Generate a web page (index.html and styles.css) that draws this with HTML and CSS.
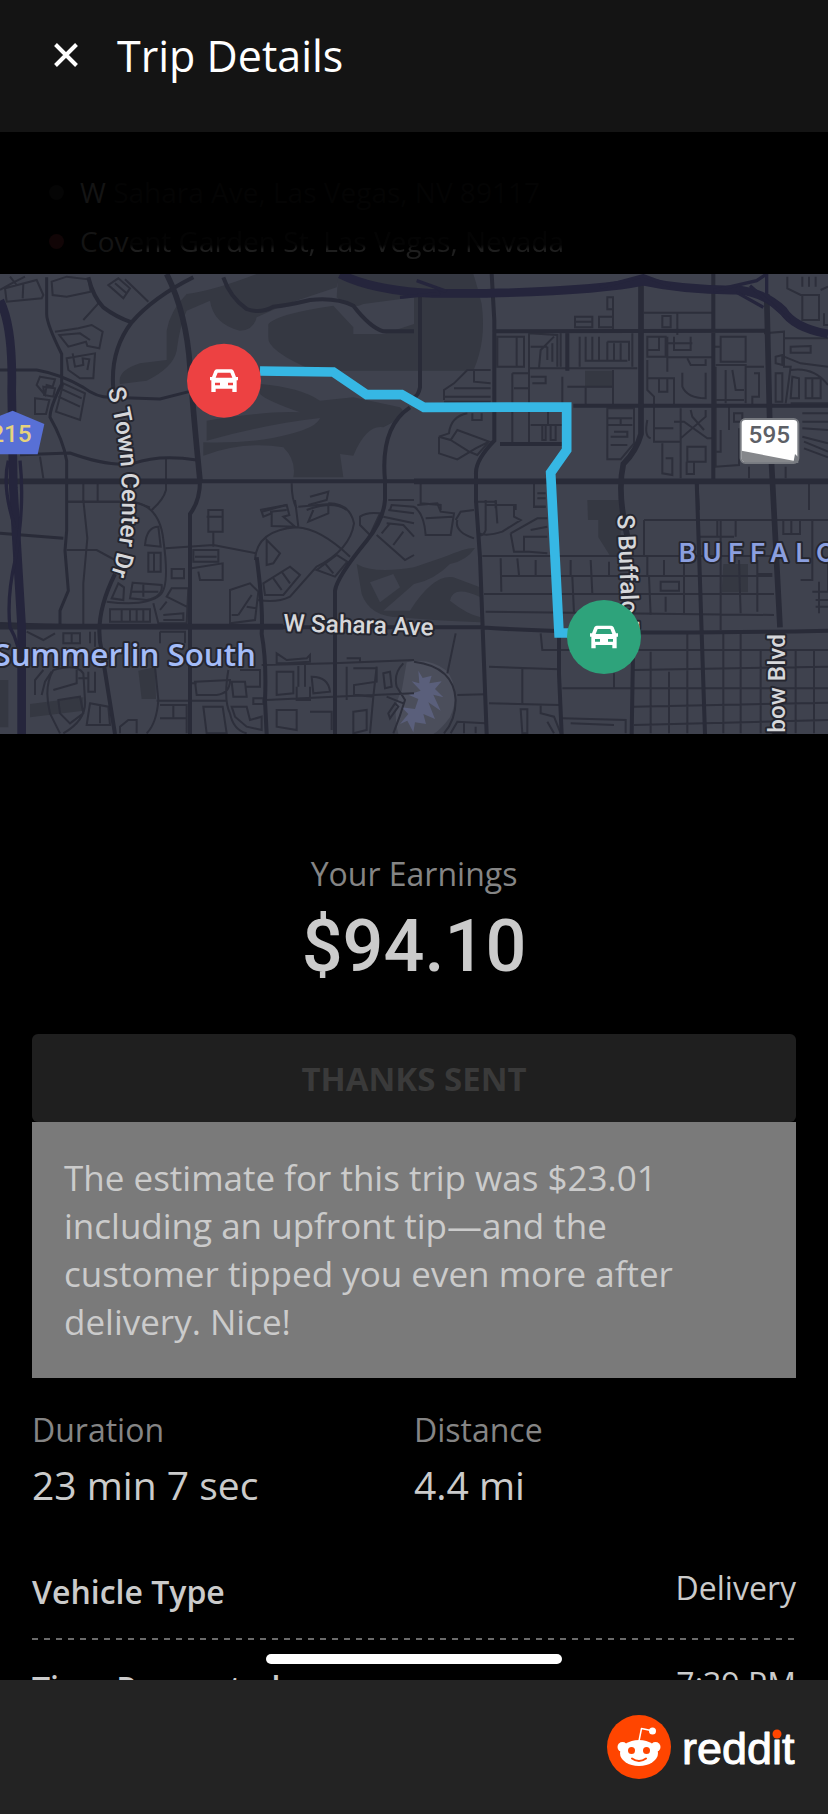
FILE: index.html
```html
<!DOCTYPE html>
<html lang="en">
<head>
  <meta charset="UTF-8" />
  <meta name="viewport" content="width=device-width, initial-scale=1.0" />
  <title>Trip Details</title>
  <link rel="stylesheet" href="styles.css">
</head>
<body>
  <header class="header">
    <button class="close" type="button" aria-label="Close">
      <svg viewBox="0 0 24 24"><path d="M1.500 1.500 22.500 22.500M22.500 1.500 1.500 22.500"/></svg>
    </button>
    <h1>Trip Details</h1>
  </header>

  <main class="trip">
    <ul class="stops">
      <li><i class="dot"></i><span>W<span class="faded"> Sahara Ave, Las Vegas, NV 89117</span></span></li>
      <li><i class="dot dot-end"></i><span>Cov<span class="half">ent Garden St, Las Vegas, Nevada</span></span></li>
    </ul>

    <svg class="map" viewBox="0 0 2484 1380" role="img" aria-label="Trip route">
      <rect width="2484" height="1380" fill="#3f424e"/>

      <!-- parks and golf courses -->
      <g fill="#353842">
        <path d="M500 170Q510 110 560 60Q640 50 770 0H1020L1010 40L860 90L770 130Q760 170 720 170Q640 150 630 80L560 110Q540 150 530 230Q520 280 440 320L360 330Q350 290 420 268L500 258Z"/>
        <path d="M805 150Q830 120 1000 95L1060 160V180H1150L1242 150V290H940Q800 230 805 190Z"/>
        <path d="M1015 0H1420Q1430 30 1445 90Q1460 200 1420 290H1242V70L1090 90Q1050 110 1010 70Z"/>
        <path d="M780 330Q900 340 960 380L1060 370L1200 400Q1230 420 1150 460Q1100 450 1060 545L1020 540L1030 610H880Q890 560 850 520Q730 500 610 545V505Q760 510 870 480Q950 460 960 432Q800 450 620 500V440Q800 410 900 415Q800 380 780 360Z"/>
        <path d="M1070 870Q1120 900 1242 880L1330 850Q1400 820 1425 822Q1400 860 1350 870Q1300 920 1242 930L1150 1010L1230 1010Q1300 900 1360 910L1440 940L1442 970Q1360 930 1350 980Q1400 1020 1442 1030V1045Q1300 1040 1200 1030Q1110 1030 1085 960Z"/>
        <path d="M1762 678H1862V845H1830L1795 790V738H1764Z"/>
        <path d="M1755 290H1838V340H1755ZM2170 870H2244V955H2165ZM415 1190L465 1180L468 1275L425 1275ZM0 1218H25V1360H0ZM90 1290L250 1270V1310L90 1330Z"/>
      </g>
      <path d="M1110 925L1180 900L1200 940L1140 985Z" fill="#3f424e"/>
      <path d="M1220 1165Q1290 1150 1340 1190Q1385 1250 1350 1330Q1320 1370 1300 1380H1195Q1175 1300 1205 1250Z" fill="#4b4e5b"/>
      <path d="M1255 1190L1268 1212L1295 1205L1288 1228L1325 1222L1305 1245L1330 1270L1300 1262L1322 1310L1285 1285L1305 1335L1270 1320L1278 1350L1245 1345L1240 1375L1222 1340L1200 1350L1225 1320L1205 1300L1245 1305L1255 1275L1225 1262L1262 1250L1235 1222L1258 1228Z" fill="#5a5f7b"/>

      <!-- small streets -->
      <g class="streets">
        <g transform="translate(0 -12)">
          <path d="M0 60L35 40L75 20M15 55L110 30L130 75L125 85L20 95ZM70 40L68 85M30 20L50 45M155 35L200 20L265 28L272 65L200 80L158 75ZM325 45L355 25L390 55L370 85ZM345 40L378 68M375 28L445 95"/>
          <path d="M165 185L235 175L275 165L308 185L298 235L262 228L258 215L205 230L178 195L240 190L270 210M200 265L285 250L280 325L240 325L205 300ZM218 250L225 290L250 285L248 265L268 268L262 300M250 150L300 95"/>
          <path d="M120 320L165 328L158 350L140 345L135 375L110 345ZM130 350L165 355L160 380L132 375ZM105 385L148 390L138 432L105 432ZM190 340L255 370L240 450L168 425ZM180 355L245 385M175 380L240 410"/>
          <path d="M120 560L130 625M498 562V660Q490 690 455 720M205 695H400L450 712M250 640V695M293 640V695M875 640Q875 690 890 715M930 680L985 665L980 690L925 705M920 720Q1000 690 1040 720M780 720L860 705M1170 720L1175 705L1242 710"/>
        </g>
        <g transform="translate(1242 -12)">
          <path d="M580 82H597V118H580ZM483 140H535V172H483ZM483 155H535M555 140H597V172H555ZM597 118V180M690 128H895M745 138H770V172H745ZM790 130V195"/>
          <path d="M250 200H330V290H250ZM308 200V290M345 190V520M345 190L430 195V290M375 295L380 240L420 200M350 230H400M400 230V270M415 220V275M440 190V290M345 295H670M497 200V290M515 200V272H640M535 200V272M555 200V272M580 215V272M580 215H645V272M600 220V272M620 220V272M655 190V290M460 350H597V300M597 350V405M515 350V405M295 310V520M295 310H345M300 355H345M350 320H395V340H355M445 400V320"/>
          <path d="M90 390V360L120 340L160 300H230M120 355H230M180 300V335L230 340M90 380H230M90 395H230M175 430V450H203V430M75 500L105 490Q110 440 160 430M75 500V550L130 568L185 535L225 515L130 480L110 510L75 500M110 510L165 545L190 555L225 515M350 465H445M385 465V510H395V465M410 465V510H425V465M402 425V465"/>
          <path d="M580 415H660V520L620 568H580ZM580 445H655M580 465H655M600 485H640V500H590M590 525H640M620 445V465M700 200H755V260H700ZM735 200V240H700M760 200V305M760 220H835M780 200V240H830V200M760 262H895M820 265L830 285H875V268M700 270V360L720 380V515H800V415M700 325H780V410M735 325V365H760V325M805 308V350Q820 385 875 385V308M720 475H778M780 455H810L880 505H895M875 420V440L800 505V625M830 420L835 440L870 480M745 520V610L775 615V565H755M820 530H875V575H820ZM818 575V612H840V575M700 450Q690 500 710 505"/>
          <path d="M920 200H995V275H920ZM895 230H918M905 285H995V400M935 300V400M955 300L965 360H990M995 290H1050M1020 310H1035V380H1015V410M900 390H990M905 290V590L975 585V475M945 410V480M920 480V545H900M960 430H985V455H960ZM1005 590V625M1115 590V625M1050 190L1110 185V290H1130L1115 400M1085 310H1105V395H1085ZM1085 260L1105 255V285L1085 280Z"/>
          <path d="M1110 205H1242M1130 230L1190 228V248H1130ZM1110 260L1160 280L1242 290M1130 300Q1200 290 1242 345M1135 320L1155 325V385H1130ZM1175 325H1220V385H1175ZM1195 325V385M1130 400H1242M1165 430H1242M1165 455H1242M1165 475L1242 480M1165 500L1242 520M1170 515L1242 545M1170 535L1242 562M1120 20V55L1160 75H1215V150H1165V75M1165 20V50M1185 20V50M1205 20V50M1220 60L1242 50M1230 130V165H1242"/>
          <path d="M20 640V700L80 705V720M180 695H245V715M245 705H305V720M360 640V710H395M370 670H395M370 685H395M850 635L855 720M1185 635V720"/>
        </g>
        <g transform="translate(0 678)">
          <path d="M200 5H400Q480 20 490 120Q510 260 480 285Q440 320 320 305M250 0L262 115L250 250V375M200 150H290L345 180M435 135Q440 80 475 80L482 140ZM445 158H482V215H445ZM462 158V215M497 145L640 135L770 160M625 30H668V95H625ZM620 50H665M640 95V140M580 150H655V185H580ZM585 170H650M575 205L668 190V240L600 240L595 215M515 207H552V235H515Z"/>
          <path d="M335 295L355 250L372 262L370 300ZM398 248L485 255Q490 290 440 300L390 295ZM430 250V290M395 275H475M330 328H450V365H330ZM365 328V365M390 328V365M410 328V365M430 328V365M460 310L475 370H560L565 265H515L500 290L560 320M480 330L500 305M490 345L550 340V360H490"/>
          <path d="M785 35L860 15L868 45L850 50L885 80L815 78V40L790 50ZM810 35L860 30M885 0L895 80M895 20L985 12V40L925 65L940 30M985 10Q1050 10 1062 70Q1050 150 950 200L870 290Q830 310 775 300M765 180Q770 90 890 82Q960 85 1050 170M800 120L840 160L820 190L800 195ZM790 250L870 200L900 225L850 285L795 285ZM820 235L845 270M845 215L870 250M950 210L1010 165L1042 185L1005 230ZM975 190L1000 220M1080 50Q1100 35 1140 40L1110 105L1080 75ZM690 270L750 250L775 275L765 360L690 370ZM755 285L715 345M740 320L770 325M695 345H715"/>
          <path d="M1165 0H1242M1165 30L1242 40M1150 50L1242 70M1130 105L1215 180L1242 165M1160 70L1210 75L1242 110M1145 100L1170 70M1180 135L1210 95"/>
          <path d="M80 395L130 420L165 400M190 400H240V430H190ZM215 400V430M270 395V430M285 395V440M480 395H555V430M480 395V430M160 510Q230 490 250 520L255 600Q260 660 190 700M160 510Q130 560 150 640L180 700M175 600L240 590L250 640L210 670L180 640ZM160 570L230 550V510M105 585V540L130 510M125 585L135 545L155 515M235 535H262M265 515V575H285V515M270 610L325 620L330 675H260ZM300 612V670M360 700V680L385 660H410V700"/>
          <path d="M465 500L475 600Q470 670 440 700M470 602H680M480 615H560V700M480 655H560M520 615V655M585 545L690 540Q690 580 650 585H590ZM575 550H590M610 620H668L680 700H620ZM690 640Q700 690 740 700M685 510Q670 600 690 640M695 545H735L740 590H700ZM720 510H780V560H735M695 620H740L750 660L785 650V690L740 680L705 650ZM760 595H790V612H760ZM800 600L1000 590L1242 580M830 460L860 480L920 475L930 465V485L860 490H830ZM785 495L1000 490L1242 480M895 490V560M915 490V560M830 515H880V580L830 585ZM935 530Q985 530 990 575L940 580ZM890 560V600H930V560M830 630H890V690L830 680ZM930 635H995V690M1040 500V600M1040 475H1080V490M1060 505H1130V545L1062 555V585L1120 590L1130 500M1060 635L1100 630V690L1060 700ZM1120 590L1110 700M1150 520L1170 515L1175 560L1155 565ZM1210 490Q1180 520 1190 560L1215 600Q1200 650 1180 700M1160 590L1210 610M1165 640L1185 610L1195 620L1170 655Z"/>
        </g>
        <g transform="translate(1242 678)">
          <path d="M0 20Q30 40 35 105H110L120 40L80 35L70 10L10 15M35 55L115 50M125 60L140 35L180 30M130 60Q120 95 180 115M215 0V90Q210 110 190 105M215 15H300V50L320 60L265 95Q220 110 195 100M245 0L250 70M290 100L370 55H400M290 100L300 155H345L400 160M330 155V110H400M350 90L400 80M360 0V20H395"/>
          <path d="M205 168H1090M260 175L262 275M310 175L315 225M365 180V225M260 228H1075M210 282H1080M215 335L1080 345M470 180V225M530 180L535 280M585 185V225M475 230L480 340M700 170V225M750 180V225M810 175V340M920 60V390M690 60H1242M690 60V170M855 110H960M910 60V110M965 60V110M975 180L980 340M1030 180V335M1030 222H1075M705 230L710 345M755 290V335M740 245H795V272H740Z"/>
          <path d="M380 400L385 450H1242M820 400V700M928 400V700M980 400V700M660 510L1242 500M710 455V700M765 515V700M1040 450V700M1145 450V700M1200 450V700M660 620L1242 608M660 675L1242 660M445 565H1242M600 520V565M225 500L435 508M325 505V610M225 610L435 615M100 520L125 400M130 585L215 583M320 628H340V700H325ZM380 615V640L420 650L440 700M445 655L635 660V700M470 670L600 675M110 700L130 665L215 670M150 670V700M185 680V700M400 665L420 700"/>
          <path d="M0 485Q120 500 125 600Q125 660 90 700M1108 60H1158V102H1108ZM1132 60V102M1160 240H1195V60M1195 275H1242V190M1205 300H1242M1205 320H1242M1215 245V340"/>
        </g>
      </g>

      <!-- collector and main roads -->
      <g class="roads">
        <path class="mid" d="M140 10V120Q140 150 185 240V330Q150 400 150 430Q190 500 200 560V770L195 830L205 950L180 1010V1060M0 288H110Q180 300 250 340Q290 370 330 370L480 375L570 352M60 542L210 537Q330 580 400 568Q480 540 590 558M0 778L190 793"/>
        <path d="M265 10Q280 70 310 100Q350 130 395 145M670 10Q690 70 740 105Q780 120 820 98Q860 95 930 78Q1010 70 1060 95Q1110 160 1150 172H1242"/>
        <path d="M580 10Q460 70 395 145Q330 230 340 345M345 900Q280 1030 305 1130L345 1380M0 622H2484M0 1050Q250 1060 600 1060H1440Q1800 1085 2484 1070M1155 620Q1140 460 1230 400M1155 620V678Q1150 740 1100 800Q1010 910 1005 950V1380M600 620Q600 680 570 720V1380M770 850Q790 1000 785 1080Q800 1160 795 1280L800 1380M1260 60V340Q1255 365 1242 370M1475 0L1483 140V500Q1425 560 1428 600V680L1440 850L1460 1380M1487 172L2300 170M1702 170V290M1500 510H1700M1720 395H2484M2140 0V620M2090 620L2115 1380M1677 1090V1200L1685 1380M1900 1080L1895 1380"/>
        <path class="wide" d="M500 0Q560 120 570 280Q580 420 600 620M1923 30V480Q1910 530 1870 570Q1850 660 1885 800M2300 60L2310 480L2340 1060M1242 622H2484M0 622H600M0 1058H850"/>
      </g>
      <g class="highways">
        <path d="M0 80Q40 160 35 350L40 640L65 1060V1380M1020 0Q1120 50 1300 58H1460Q1800 50 1930 22Q2060 50 2220 48Q2300 60 2350 110Q2380 160 2484 180"/>
        <path d="M25 560Q5 640 45 760M60 560Q75 700 45 860Q20 970 30 1060Q60 1110 60 1180M1200 70L1320 58M1250 20L1340 52M1800 40L1930 5L2010 35M2140 50L2270 20L2300 0V60M2210 55L2290 100M2250 35L2370 140"/>
      </g>

      <polyline class="route" points="780,291 1000,294 1100,362 1205,362 1272,400 1700,399 1700,528 1652,596 1677,1077 1720,1077"/>

      <!-- road shields -->
      <path d="M-60 450L38 410L133 450L113 541H-40Z" fill="#5870d6"/>
      <text class="shield-blue" x="95" y="505">215</text>
      <rect x="2222" y="435" width="173" height="132" rx="14" fill="#fff" stroke="#777a80" stroke-width="6"/>
      <path d="M2225 530L2388 562L2385 565H2238Q2225 565 2225 552Z" fill="#85878b"/>
      <path d="M2385 540L2395 550V567H2380Z" fill="#777a80"/>
      <text class="shield-white" x="2308" y="506">595</text>

      <!-- labels -->
      <path id="town" d="M322 347C352 450 366 560 366 690C366 780 352 850 325 925" fill="none"/>
      <path id="buffalo" d="M1852 722L1872 1200" fill="none"/>
      <path id="sahara" d="M850 1072Q1100 1077 1340 1086" fill="none"/>
      <text class="road-name"><textPath href="#town">S Town Center Dr</textPath></text>
      <text class="road-name"><textPath href="#buffalo">S Buffalo Dr</textPath></text>
      <text class="road-name"><textPath href="#sahara">W Sahara Ave</textPath></text>
      <text class="road-name road-name-end" transform="translate(2354 1080) rotate(-90)">S Rainbow Blvd</text>
      <text class="area-name" x="768" y="1176">Summerlin South</text>
      <text class="district-name" x="2036" y="865">BUFFALO</text>

      <!-- markers -->
      <g transform="translate(672 320)">
        <circle r="111" fill="#ed4142"/>
        <path class="car" d="M-22-34H22Q27-34 29-29L36-11H42V-1H38V34H25V24H-25V34H-38V-1H-42V-11H-36L-29-29Q-27-34-22-34ZM-19-24L-25-9H25L19-24ZM-27 6V14H-12V6ZM12 6V14H27V6Z"/>
      </g>
      <g transform="translate(1812 1089)">
        <circle r="111" fill="#2ea37b"/>
        <path class="car" d="M-22-34H22Q27-34 29-29L36-11H42V-1H38V34H25V24H-25V34H-38V-1H-42V-11H-36L-29-29Q-27-34-22-34ZM-19-24L-25-9H25L19-24ZM-27 6V14H-12V6ZM12 6V14H27V6Z"/>
      </g>
    </svg>

    <section class="earnings">
      <p class="label">Your Earnings</p>
      <p class="amount">$94.10</p>
    </section>

    <section class="content">
      <button class="thanks" type="button" disabled>THANKS SENT</button>
      <p class="note">The estimate for this trip was $23.01 including an upfront tip—and the customer tipped you even more after delivery. Nice!</p>

      <dl class="stats">
        <div>
          <dt class="label">Duration</dt>
          <dd>23 min 7 sec</dd>
        </div>
        <div>
          <dt class="label">Distance</dt>
          <dd>4.4 mi</dd>
        </div>
      </dl>

      <dl class="details">
        <div class="row">
          <dt>Vehicle Type</dt>
          <dd>Delivery</dd>
        </div>
        <div class="row">
          <dt>Time Requested</dt>
          <dd>7:39 PM</dd>
        </div>
      </dl>
    </section>

    <div class="home-indicator"></div>
  </main>

  <footer class="footer">
    <svg class="logo" viewBox="0 0 190 66" role="img" aria-label="reddit">
      <circle cx="33" cy="33" r="32" fill="#ff4500"/>
      <g fill="#fff">
        <circle cx="16.500" cy="33" r="5"/>
        <circle cx="49.500" cy="33" r="5"/>
        <ellipse cx="33" cy="39" rx="19" ry="13"/>
        <circle cx="46.500" cy="17" r="3.500"/>
      </g>
      <path d="M33 27L35.500 14.500L45 16.500" fill="none" stroke="#fff" stroke-width="1.500" stroke-linejoin="round"/>
      <circle cx="25.500" cy="36.500" r="3.500" fill="#ff4500"/>
      <circle cx="40.500" cy="36.500" r="3.500" fill="#ff4500"/>
      <path d="M26 44.500Q33 49.500 40 44.500" fill="none" stroke="#ff4500" stroke-width="2" stroke-linecap="round"/>
      <text class="wordmark" x="76" y="50">reddit</text>
      <circle cx="171" cy="20" r="4.500" fill="#ff4500"/>
    </svg>
  </footer>
</body>
</html>
```

FILE: styles.css
```css
* {
  box-sizing: border-box;
}
body {
  margin: 0;
  height: 100vh;
  display: flex;
  flex-direction: column;
  background-color: #000;
  color: #cbcbcb;
  font-family: "Open Sans", "Noto Sans", sans-serif;
  font-size: 32px;
  line-height: 44px;
}
h1, p, ul, dl, dd {
  margin: 0;
  padding: 0;
}

.header {
  flex: none;
  display: flex;
  align-items: center;
  gap: 39px;
  height: 132px;
  padding: 0 54px 21px;
  background-color: #141414;
  color: #fff;
}
.header h1 {
  font-size: 43px;
  font-weight: 400;
  line-height: 60px;
}
.close {
  width: 24px;
  height: 26px;
  padding: 0 0 2px;
  border: none;
  background: none;
  cursor: pointer;
}
.close svg {
  display: block;
  stroke: #fff;
  stroke-width: 4;
}

.trip {
  position: relative;
  flex: 1;
  min-height: 0;
  overflow: hidden;
}
.stops {
  padding: 36px 49px 8px;
  list-style: none;
  font-size: 28px;
  line-height: 49px;
  color: #141414;
}
.stops li {
  display: flex;
  align-items: center;
  gap: 16px;
}
.dot {
  width: 15px;
  height: 15px;
  border-radius: 50%;
  background-color: #050505;
}
.dot-end {
  background-color: #110506;
}
.faded {
  color: #040404;
}
.half {
  background: linear-gradient(#040404 60%, #1e1e1e 72%);
  -webkit-background-clip: text;
  background-clip: text;
  color: transparent;
}

.map {
  display: block;
  width: 100%;
}
.streets {
  fill: none;
  stroke: #2d2f3b;
  stroke-width: 6;
}
.roads {
  fill: none;
  stroke: #292b38;
  stroke-width: 12;
}
.roads .mid {
  stroke-width: 9;
}
.roads .wide {
  stroke-width: 17;
}
.highways {
  fill: none;
  stroke: #25253c;
  stroke-width: 26;
}
.highways path + path {
  stroke-width: 10;
}
.route {
  fill: none;
  stroke: #36b7e4;
  stroke-width: 29;
}
.map text {
  font-family: Roboto, sans-serif;
  font-weight: 500;
  font-size: 73px;
}
.map .road-name, .map .area-name, .map .district-name {
  fill: #d6d7da;
  stroke: #25262f;
  stroke-width: 12;
  stroke-linejoin: round;
  paint-order: stroke;
}
.map .road-name-end {
  text-anchor: end;
}
.map .area-name {
  font-family: "Open Sans", sans-serif;
  font-weight: 600;
  font-size: 94px;
  fill: #a4bcf8;
  text-anchor: end;
}
.map .district-name {
  font-family: Inter, sans-serif;
  font-weight: 600;
  font-size: 78px;
  letter-spacing: 20px;
  fill: #8b9fdf;
}
.map .shield-blue {
  fill: #e6d27c;
  text-anchor: end;
}
.map .shield-white {
  fill: #5d6066;
  text-anchor: middle;
}
.car {
  fill: #fff;
  fill-rule: evenodd;
}

.label {
  color: #858585;
}
.earnings {
  padding: 118px 32px 36px;
  text-align: center;
}
.amount {
  font-family: Roboto, sans-serif;
  font-size: 72px;
  font-weight: 500;
  line-height: 102px;
}
.content {
  padding: 0 32px;
}
.thanks {
  display: block;
  width: 100%;
  height: 88px;
  border: none;
  border-radius: 6px;
  background-color: #1f1f1f;
  color: #3a3a3a;
  font-family: inherit;
  font-size: 33px;
  font-weight: 700;
}
.note {
  padding: 32px;
  background-color: #7a7a7a;
  font-size: 35px;
  line-height: 48px;
}
.stats {
  display: grid;
  grid-template-columns: 1fr 1fr;
  padding: 30px 0 26px;
}
.stats dd {
  font-size: 39px;
  line-height: 66px;
}
.row {
  display: flex;
  justify-content: space-between;
  height: 96px;
  padding: 22px 0 24px;
  background: repeating-linear-gradient(90deg, #6a6a6a 0 6px, transparent 6px 12px) bottom / 100% 2px no-repeat;
}
.row dt {
  padding-top: 4px;
  font-weight: 600;
}
.home-indicator {
  position: absolute;
  left: 50%;
  bottom: 16px;
  width: 296px;
  height: 10px;
  border-radius: 5px;
  background-color: #fff;
  transform: translateX(-50%);
}

.footer {
  flex: none;
  display: flex;
  align-items: center;
  justify-content: flex-end;
  height: 134px;
  padding: 0 32px;
  background-color: #232323;
}
.logo {
  width: 190px;
  height: 66px;
}
.wordmark {
  font-family: "Liberation Sans", Arial, sans-serif;
  font-size: 45px;
  fill: #fff;
  stroke: #fff;
  stroke-width: 1;
  stroke-linejoin: round;
}
```
